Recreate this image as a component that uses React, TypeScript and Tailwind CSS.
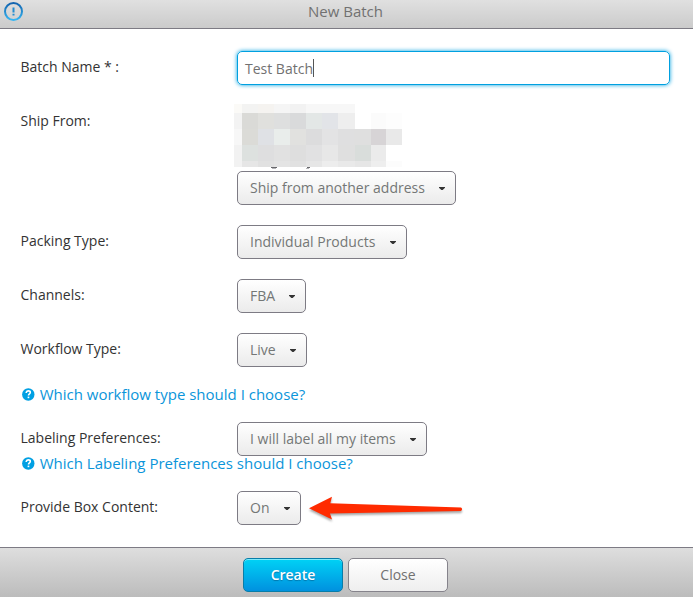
import type { ReactNode } from 'react';

const mosaic: [number, number, number, number, string][] = [
  [0, 0, 8, 9, '#fbfaf7'], [8, 0, 16, 9, '#f3f3f2'], [24, 0, 16, 9, '#f5f3f0'], [40, 0, 16, 9, '#f5f5f5'],
  [56, 0, 16, 9, '#f2f2f2'], [72, 0, 49, 9, '#f7f7f7'],
  [0, 9, 8, 16, '#f3f3f3'], [8, 9, 16, 16, '#dadad7'], [24, 9, 16, 16, '#e0e0dd'], [40, 9, 16, 16, '#dedfdf'],
  [56, 9, 16, 16, '#d9dadb'], [72, 9, 16, 16, '#e3e7e6'], [88, 9, 16, 16, '#e2e4e8'], [104, 9, 17, 16, '#eeeeee'],
  [137, 9, 15, 16, '#fbfbfb'], [152, 9, 16, 16, '#fdfdfd'],
  [0, 25, 8, 16, '#f7f7f7'], [8, 25, 16, 16, '#dbdbd7'], [24, 25, 16, 16, '#dfe1e5'], [40, 25, 16, 16, '#e9edeb'],
  [56, 25, 16, 16, '#e1e1df'], [72, 25, 16, 16, '#dcdcdd'], [88, 25, 16, 16, '#e3e3e4'], [104, 25, 16, 16, '#dfdfe0'],
  [120, 25, 17, 16, '#dfdfdf'], [137, 25, 15, 16, '#d7d4d6'], [152, 25, 16, 16, '#e9e9e9'],
  [0, 41, 8, 16, '#f2f2f2'], [8, 41, 16, 16, '#dde1df'], [24, 41, 16, 16, '#dededf'], [40, 41, 16, 16, '#e1e1e1'],
  [56, 41, 16, 16, '#dedede'], [72, 41, 16, 16, '#e1e1e2'], [88, 41, 16, 16, '#e7e7e7'], [104, 41, 17, 16, '#dfdfdf'],
  [121, 41, 16, 16, '#d9dddb'], [137, 41, 15, 16, '#ebebeb'],
  [0, 57, 8, 6, '#f2f2f2'], [8, 57, 16, 6, '#e6e6e6'], [24, 57, 16, 6, '#e1e1e1'], [40, 57, 16, 6, '#e4e4e4'],
  [56, 57, 16, 6, '#e1e1e1'], [72, 57, 16, 6, '#e6e6e6'], [88, 57, 16, 6, '#ededed'], [104, 57, 17, 6, '#e9e9e9'],
  [121, 57, 16, 6, '#e6e6e6'], [137, 57, 15, 6, '#eeeeee'], [152, 57, 16, 6, '#fcfcfc'],
];

function RedactedAddress() {
  return (
    <svg className="-ml-[3px] -mt-px block h-[67px] w-[168px]" viewBox="0 0 168 67" shapeRendering="crispEdges">
      {mosaic.map(([x, y, w, h, fill]) => (
        <rect key={`${x}-${y}`} x={x} y={y} width={w} height={h} fill={fill} />
      ))}
      <rect x="37" y="63" width="6" height="1" fill="#68686c" />
      <rect x="38" y="64" width="4" height="1" fill="#b5b5b8" />
      <rect x="73" y="63" width="3" height="1" fill="#68686c" />
      <rect x="72" y="64" width="3" height="1" fill="#b5b5b8" />
    </svg>
  );
}

function Row({ label, children, className = 'mb-5' }: { label: string; children: ReactNode; className?: string }) {
  return (
    <div className={`flex ${className}`}>
      <div className="w-[216.5px] shrink-0 text-[14px] leading-[32px] text-[#333]">{label}</div>
      <div>{children}</div>
    </div>
  );
}

function Dropdown({ text, width }: { text: string; width: string }) {
  return (
    <button
      className={`flex h-[34px] items-center justify-between rounded-[5px] border border-[#7d7b84] bg-linear-to-b from-white to-[#ebebeb] pl-3 pr-[10px] text-[14px] leading-8 whitespace-nowrap text-[#747776] ${width}`}
    >
      {text}
      <svg className="mt-px h-[3px] w-[6px]" viewBox="0 0 6 3">
        <path d="M0 0h6v0.8L3.6 3H2.4L0 0.8z" fill="#333" />
      </svg>
    </button>
  );
}

function HelpLink({ text, className }: { text: string; className: string }) {
  return (
    <a className={`flex items-center text-[15px] text-[#0b95da] ${className}`}>
      <svg className="mr-[5px] ml-[1.2px] h-[13px] w-[13px]" viewBox="0 0 13 13">
        <circle cx="6.3" cy="6.5" r="6.2" fill="#00a0e3" />
        <path d="M4.3 5.1V4.2C4.6 3.3 5.3 2.9 6.3 2.9c1.2 0 2 .6 2 1.6 0 1.3-1.8 1.3-1.8 2.9" fill="none" stroke="#fff" strokeWidth="1.6" />
        <rect x="5.6" y="8.6" width="1.7" height="1.6" fill="#fff" />
      </svg>
      {text}
    </a>
  );
}

function Arrow() {
  return (
    <svg className="ml-[7px] h-[34px] w-[160px] overflow-visible" viewBox="308 491 160 34">
      <path
        d="M309 508.2L332 496.8L330.3 503.2L461 507.5Q463.2 509 461 510.9L330 513.5L332 519.5Z"
        fill="#ff2b00"
        className="drop-shadow-[0_2px_1px_rgba(0,0,0,0.35)]"
      />
    </svg>
  );
}

export default function App() {
  return (
    <div className="flex h-[597px] w-[693px] flex-col overflow-hidden bg-white font-['Open_Sans',sans-serif]">
      <header className="relative flex h-[29px] shrink-0 justify-center border-b border-[#7d7b84] bg-linear-to-b from-[#e0e0e0] to-[#cbcbcb] pr-[2px] text-[15px] leading-[23px] text-[#717171]">
        <svg className="absolute top-[2px] left-[4px] h-[20px] w-[20px]" viewBox="0 0 20 20">
          <defs>
            <linearGradient id="ring" x1="0" y1="0" x2="0" y2="1">
              <stop offset="0" stopColor="#1263ae" />
              <stop offset="1" stopColor="#35b5f2" />
            </linearGradient>
          </defs>
          <circle cx="9.5" cy="9.5" r="8.5" fill="none" stroke="url(#ring)" strokeWidth="2" />
          <path d="M8.5 5.5h2v5h-2zM8.5 11.8h2v1.8h-2z" fill="#238cd0" />
        </svg>
        <h1>New Batch</h1>
      </header>

      <main className="h-[518px] shrink-0 pt-[22px] pl-[20.5px]">
        <Row label="Batch Name * :">
          <div className="flex h-[34px] w-[433px] items-center rounded-[5px] border border-[#00a0e0] pl-[7px] text-[14px] text-[#717171] shadow-[0_0_4px_#00a0e0]">
            Test Batch
            <span className="h-[18px] w-px bg-[#555]" />
          </div>
        </Row>
        <Row label="Ship From:">
          <RedactedAddress />
          <Dropdown text="Ship from another address" width="w-[219px]" />
        </Row>
        <Row label="Packing Type:">
          <Dropdown text="Individual Products" width="w-[170px]" />
        </Row>
        <Row label="Channels:">
          <Dropdown text="FBA" width="w-[69px]" />
        </Row>
        <Row label="Workflow Type:" className="">
          <Dropdown text="Live" width="w-[70px]" />
        </Row>
        <HelpLink text="Which workflow type should I choose?" className="h-[55px]" />
        <Row label="Labeling Preferences:" className="">
          <Dropdown text="I will label all my items" width="w-[190px]" />
        </Row>
        <HelpLink text="Which Labeling Preferences should I choose?" className="mb-[20px] h-[15px]" />
        <Row label="Provide Box Content:">
          <div className="flex">
            <Dropdown text="On" width="w-[64px]" />
            <Arrow />
          </div>
        </Row>
      </main>

      <footer className="flex h-[50px] shrink-0 justify-center gap-[5px] border-t border-[#7d7b84] bg-linear-to-b from-[#dedede] to-[#bcbcbc] pt-[10px] pr-[2px] text-[14px]">
        <button className="h-[34px] w-[100px] rounded-[5px] border border-[#087da8] bg-linear-to-b from-[#00d2f5] to-[#0091df] pb-[2px] font-semibold text-white inset-shadow-[0_1px_0_#7ee9fb] text-shadow-[0_1px_1px_#0077ad]">
          Create
        </button>
        <button className="h-[34px] w-[100px] rounded-[5px] border border-[#85838b] bg-linear-to-b from-white to-[#eeeeee] pb-[2px] text-[#717171]">
          Close
        </button>
      </footer>
    </div>
  );
}
